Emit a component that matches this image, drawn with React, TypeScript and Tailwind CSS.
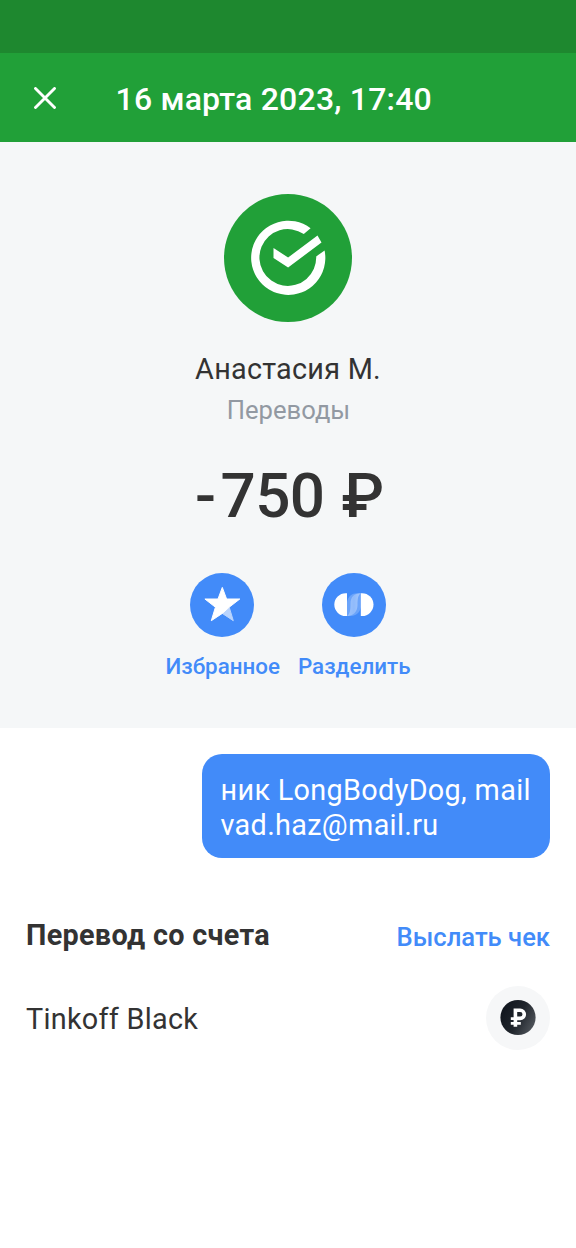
import type { ReactNode } from "react";

function CheckLogo() {
  return (
    <svg className="size-32 shrink-0" viewBox="0 0 128 128">
      <circle cx="64" cy="64" r="64" fill="#21a038" />
      <path d="M86.6 34.2A37.1 37.1 0 1 0 100.6 56.4L92.2 62.4A28.4 28.4 0 1 1 79.8 40Z" fill="#fff" />
      <path d="M49.5 54 64.1 63.5 93.5 41.6 97.5 48.6 64.1 73.4 49.5 64Z" fill="#fff" />
    </svg>
  );
}

function StarIcon() {
  return (
    <svg className="size-16" viewBox="0 0 64 64">
      <circle cx="32" cy="32" r="32" fill="#428bf9" />
      <path d="M39.2 34.2 43.3 47.7 32.3 40.4Z" fill="#b9d4fd" stroke="#b9d4fd" strokeLinejoin="round" />
      <path
        d="M32.3 14.4 36.6 26H49.8L39.2 34.2 32.3 40.4 21.3 47.7 25.4 34.2 14.9 26H28Z"
        fill="#fff"
        stroke="#fff"
        strokeLinejoin="round"
      />
    </svg>
  );
}

function SplitIcon() {
  return (
    <svg className="size-16" viewBox="0 0 64 64">
      <defs>
        <linearGradient id="ribbon" x1="0" y1="0" x2="1" y2="0">
          <stop offset="0" stopColor="#fff" stopOpacity="0.35" />
          <stop offset="0.5" stopColor="#fff" stopOpacity="0.25" />
          <stop offset="1" stopColor="#fff" stopOpacity="0.4" />
        </linearGradient>
      </defs>
      <circle cx="32" cy="32" r="32" fill="#428bf9" />
      <path d="M25 20.2H23.7A11.4 11.4 0 0 0 23.7 43H25Z" fill="#fff" />
      <path d="M38.8 20.2H40.1A11.4 11.4 0 0 1 40.1 43H38.8Z" fill="#fff" />
      <path d="M25 29C26 23.5 30 20.2 35 20.2H38.8V34C38 39.5 34 43 29 43H25Z" fill="#fff" fillOpacity="0.22" />
      <path d="M38.8 20.2C32 20.2 28.5 24 28.5 31 28.5 37 28 41 25 43 31.5 43 35.5 38.5 35.5 32 35.5 26 36 22 38.8 20.2Z" fill="url(#ribbon)" />
    </svg>
  );
}

function RoubleIcon() {
  return (
    <svg className="size-16" viewBox="0 0 64 64">
      <defs>
        <linearGradient id="coin" x1="0" y1="0.3" x2="1" y2="0.8">
          <stop offset="0" stopColor="#10151d" />
          <stop offset="0.5" stopColor="#20252c" />
          <stop offset="1" stopColor="#555a60" />
        </linearGradient>
      </defs>
      <circle cx="32" cy="32" r="32" fill="#f6f7f8" />
      <circle cx="32" cy="31.5" r="17.6" fill="url(#coin)" />
      <g fill="none" stroke="#fff">
        <path d="M29.4 40.8V24.2H34.2a4.1 4.1 0 0 1 0 8.2H29.4" strokeWidth="3.6" />
        <path d="M24.8 32.6H34.2M24.8 37.4H34.8" strokeWidth="2.9" />
      </g>
    </svg>
  );
}

function Action({ label, children }: { label: string; children: ReactNode }) {
  return (
    <button className="flex w-[131.5px] flex-col items-center gap-[15px] whitespace-nowrap text-[22.4px] leading-7 font-medium text-[#428bf9]">
      {children}
      <span className="pl-px">{label}</span>
    </button>
  );
}

export default function App() {
  return (
    <div className="flex h-[1248px] w-[576px] flex-col overflow-hidden bg-white font-['Roboto',sans-serif] text-[#333]">
      <div className="h-[53px] shrink-0 bg-[#1e882f]" />
      <header className="flex h-[89px] shrink-0 items-center bg-[#21a038] pl-[34px] text-white">
        <svg className="mr-[59.5px] size-[22px]" viewBox="0 0 22 22" fill="none" stroke="currentColor" strokeWidth="2.9" strokeLinecap="round">
          <path d="m1.5 1.5 19 19m0-19-19 19" />
        </svg>
        <h1 className="pt-[3px] text-[32px] leading-10 font-medium tracking-[0.2px]">16 марта 2023, 17:40</h1>
      </header>

      <section className="flex h-[586px] shrink-0 flex-col items-center bg-[#f5f7f8] pt-[51.5px]">
        <CheckLogo />
        <div className="mt-[29px] text-[28.8px] leading-9 tracking-[0.25px]">Анастасия М.</div>
        <div className="mt-[7px] pl-px text-[25.6px] leading-8 text-[#9299a2]">Переводы</div>
        <div className="mt-7 flex pl-[3px] text-[62px] leading-[84px] font-medium">
          <span className="mr-[4.5px]">-</span>
          <span className="tracking-[-0.6px]">750</span>
          <span className="ml-[17px]">₽</span>
        </div>
        <div className="mt-[35px] flex">
          <Action label="Избранное"><StarIcon /></Action>
          <Action label="Разделить"><SplitIcon /></Action>
        </div>
      </section>

      <main className="flex flex-col px-[26px] pt-[26px]">
        <div className="h-[103.5px] w-[348.5px] self-end rounded-[20px] bg-[#428bf9] pt-[19px] pl-[19px] text-[28.8px] leading-[34.5px] tracking-[0.33px] whitespace-nowrap text-white">
          ник LongBodyDog, mail
          <br />
          vad.haz@mail.ru
        </div>
        <div className="mt-[58.5px] flex h-10 items-center justify-between">
          <h2 className="text-[28.8px] font-bold tracking-[0.3px]">Перевод со счета</h2>
          <a className="pt-[3px] text-[25.6px] font-medium text-[#428bf9]">Выслать чек</a>
        </div>
        <div className="mt-[29.5px] flex h-16 items-center justify-between">
          <span className="pt-1 text-[28.8px] tracking-[0.28px]">Tinkoff Black</span>
          <RoubleIcon />
        </div>
      </main>
    </div>
  );
}
